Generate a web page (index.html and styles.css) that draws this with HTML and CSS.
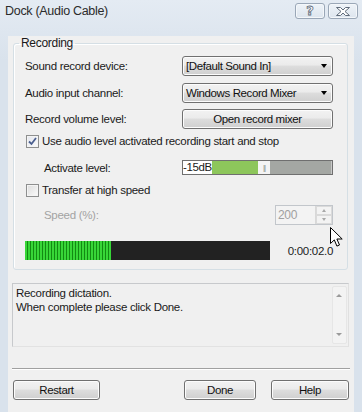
FILE: index.html
```html
<!DOCTYPE html>
<html lang="en">

<head>
  <meta charset="UTF-8">
  <title>Dock (Audio Cable)</title>
  <link rel="stylesheet" href="styles.css">
</head>

<body>
  <div class="window">
    <div class="titlebar">
      <span class="title">Dock (Audio Cable)</span>
      <span class="cap-btn help-btn">?</span>
      <span class="cap-btn close-btn">
        <svg width="16" height="11" viewBox="0 0 16 11">
          <path d="M1.5 1.5h4l2.5 2.5 2.5-2.5h4l-4.5 4 4.5 4h-4l-2.5-2.5-2.5 2.5h-4l4.5-4z" fill="#fff" stroke="#5f6b7a" stroke-width="1" stroke-linejoin="round"/>
        </svg>
      </span>
    </div>

    <div class="client">
      <fieldset class="group">
        <legend>Recording</legend>

        <div class="row row-first">
          <span class="lbl">Sound record device:</span>
          <div class="combo">[Default Sound In]<span class="arrow"></span></div>
        </div>
        <div class="row row-second">
          <span class="lbl">Audio input channel:</span>
          <div class="combo">Windows Record Mixer<span class="arrow"></span></div>
        </div>
        <div class="row row-third">
          <span class="lbl">Record volume level:</span>
          <button class="btn mixer">Open record mixer</button>
        </div>

        <div class="row check-row check-first">
          <span class="check checked">
            <svg width="9" height="9" viewBox="0 0 9 9"><path d="M1 4.5l2.5 2.5 4.5-6" fill="none" stroke="#4b5f8f" stroke-width="1.8"/></svg>
          </span>
          <span>Use audio level activated recording start and stop</span>
        </div>

        <div class="row slider-row">
          <span class="lbl sub">Activate level:</span>
          <div class="slider">
            <span class="db">-15dB</span>
            <span class="fill"></span>
            <span class="thumb">||</span>
            <span class="rest"></span>
          </div>
        </div>

        <div class="row check-row check-second">
          <span class="check"></span>
          <span>Transfer at high speed</span>
        </div>

        <div class="row speed-row">
          <span class="lbl sub disabled">Speed (%):</span>
          <div class="spin">
            <span class="spin-val">200</span>
            <span class="spin-btns">
              <span class="spin-up"></span>
              <span class="spin-down"></span>
            </span>
          </div>
        </div>

        <div class="row meter-row">
          <div class="meter">
            <span class="meter-level" style="width: 86px"></span>
          </div>
          <span class="time">0:00:02.0</span>
        </div>
      </fieldset>

      <div class="log">
        <div class="log-text">
          Recording dictation.<br>
          When complete please click Done.
        </div>
        <div class="scroll">
          <span class="scroll-up"></span>
          <span class="scroll-down"></span>
        </div>
      </div>

      <div class="sep"></div>

      <div class="buttons">
        <button class="btn restart">Restart</button>
        <button class="btn done">Done</button>
        <button class="btn help">Help</button>
      </div>
    </div>

    <svg class="cursor" width="14" height="21" viewBox="0 0 14 21">
      <path d="M0.5 0.5v16l3.8-3.6 2.6 6.2 2.6-1.1-2.6-6h5.3z" fill="#fff" stroke="#000" stroke-width="1" stroke-linejoin="round"/>
    </svg>
  </div>
</body>

</html>
```

FILE: styles.css
```css
html,
body {
  margin: 0;
  height: 100%;
}

body {
  background: #dbe4ee;
  font-family: "Liberation Sans", Arial, sans-serif;
  font-size: 11.5px;
  letter-spacing: -0.3px;
  color: #1a1a1a;
}

.window {
  position: relative;
  width: 362px;
  height: 412px;
  background: linear-gradient(#e4ebf3, #d9e2ec 60px, #d9e2ec);
}

/* title bar */

.titlebar {
  display: flex;
  align-items: flex-start;
  height: 22px;
  padding: 0 4px 0 5px;
}

.title {
  margin-top: 4px;
  font-size: 12.5px;
  color: #2b2b2b;
  flex: 1;
}

.cap-btn {
  display: flex;
  align-items: center;
  justify-content: center;
  width: 28px;
  height: 14px;
  margin-top: 3px;
  border: 1px solid #9aa7b7;
  border-radius: 3px;
  background: linear-gradient(#eef3f8, #dde5ee);
  box-shadow: inset 0 0 0 1px #f4f7fa;
}

.help-btn {
  font-family: "DejaVu Sans", sans-serif;
  font-size: 13px;
  font-weight: bold;
  color: #fff;
  -webkit-text-stroke: 0.8px #5f6b7a;
  line-height: 14px;
  letter-spacing: 0;
}

.close-btn {
  margin-left: 3px;
}

/* client area */

.client {
  height: 382px;
  margin: 0 8px;
  padding: 0 6px 0 5px;
  background: #f0f0f0;
  box-sizing: border-box;
}

.group {
  margin: 14px 0 0;
  padding: 6px 14px 9px 11px;
  border: 1px solid #d5dfe5;
  border-radius: 3px;
  box-shadow: inset 1px 1px 0 #fff;
  min-width: 0;
}

.group legend {
  padding: 0 2px;
  margin-left: -6px;
  line-height: 14px;
  font-size: 12px;
}

.row {
  display: flex;
  align-items: center;
  height: 20px;
}

.row-second {
  margin-top: 7px;
}

.row-third {
  margin-top: 6px;
}

.lbl {
  width: 157px;
  flex: none;
}

.lbl.sub {
  padding-left: 19px;
  box-sizing: border-box;
}

.disabled {
  color: #a3a3a3;
}

/* combo boxes and buttons */

.combo,
.btn {
  position: relative;
  box-sizing: border-box;
  height: 20px;
  border: 1px solid #707070;
  border-radius: 3px;
  background: linear-gradient(#f2f2f2, #ebebeb 45%, #dddddd 50%, #cfcfcf);
  box-shadow: inset 0 0 0 1px #fcfcfc;
  font-family: inherit;
  font-size: 11.5px;
  letter-spacing: -0.4px;
  color: #111;
}

.combo {
  width: 151px;
  padding-left: 3px;
  line-height: 18px;
}

.arrow {
  position: absolute;
  right: 5px;
  top: 7px;
  border-left: 3.5px solid transparent;
  border-right: 3.5px solid transparent;
  border-top: 4px solid #000;
}

.btn {
  padding: 0;
  text-align: center;
}

.mixer {
  width: 151px;
}

/* check boxes */

.check-row {
  height: 16px;
}

.check-first {
  margin-top: 4px;
}

.check-second {
  margin-top: 7px;
}

.check {
  display: flex;
  align-items: center;
  justify-content: center;
  width: 13px;
  height: 13px;
  margin: 0 3px 0 1px;
  box-sizing: border-box;
  border: 1px solid #8e8f8f;
  background: linear-gradient(135deg, #dcdcdc, #fbfbfb);
  box-shadow: inset 0 0 0 1px #f4f4f4;
}

.check.checked {
  background: linear-gradient(135deg, #e3e6ee, #fbfbfb);
}

/* activate level slider */

.slider-row {
  height: 15px;
  margin-top: 11px;
}

.slider {
  display: flex;
  width: 151px;
  height: 15px;
  box-sizing: border-box;
  border: 1px solid #6f6f6f;
  background: #a4a7a3;
}

.db {
  width: 29px;
  background: #fff;
  font-size: 11.5px;
  letter-spacing: -0.4px;
  line-height: 13px;
  white-space: nowrap;
}

.fill {
  width: 46px;
  background: #8dc65b;
}

.thumb {
  width: 12px;
  background: #f4f4f4;
  color: #888;
  font-size: 8px;
  line-height: 13px;
  text-align: center;
  letter-spacing: -1px;
}

.rest {
  flex: 1;
  border-right: 1px solid #c8c8c8;
}

/* speed spin box */

.speed-row {
  margin-top: 7px;
  justify-content: space-between;
}

.spin {
  display: flex;
  width: 58px;
  height: 20px;
  box-sizing: border-box;
  border: 1px solid #c2c6cb;
  background: #f3f3f3;
}

.spin-val {
  flex: 1;
  padding-left: 2px;
  line-height: 18px;
  font-size: 12px;
  color: #a0a0a0;
}

.spin-btns {
  display: flex;
  flex-direction: column;
  width: 16px;
  border-left: 1px solid #d8d8d8;
}

.spin-up,
.spin-down {
  flex: 1;
  position: relative;
  border: 1px solid #dadada;
}

.spin-up::after,
.spin-down::after {
  content: "";
  position: absolute;
  left: 5px;
  top: 2px;
  border-left: 2.5px solid transparent;
  border-right: 2.5px solid transparent;
}

.spin-up::after {
  border-bottom: 3px solid #a8a8a8;
}

.spin-down::after {
  border-top: 3px solid #a8a8a8;
}

/* level meter */

.meter-row {
  height: 19px;
  margin-top: 16px;
  justify-content: space-between;
}

.meter {
  display: flex;
  width: 245px;
  height: 19px;
  background: #222;
}

.meter-level {
  background: repeating-linear-gradient(90deg, #37d637 0, #37d637 2px, #128a12 2px, #128a12 3px);
}

.time {
  font-size: 11.5px;
  color: #222;
}

/* message box */

.log {
  display: flex;
  height: 64px;
  margin: 13px -1px 0 -1px;
  box-sizing: border-box;
  border: 1px solid #c7c9cc;
  border-right-color: #e0e0e0;
  border-bottom-color: #e2e2e2;
}

.log-text {
  flex: 1;
  padding: 2px 0 0 3px;
  line-height: 14px;
  font-size: 11.5px;
}

.scroll {
  position: relative;
  width: 13px;
  margin: 2px 1px 2px 0;
  border: 1px solid #e6e6e6;
  border-radius: 2px;
  background: #f3f3f3;
}

.scroll-up,
.scroll-down {
  position: absolute;
  left: 3px;
  border-left: 3px solid transparent;
  border-right: 3px solid transparent;
}

.scroll-up {
  top: 7px;
  border-bottom: 3px solid #9a9a9a;
}

.scroll-down {
  bottom: 7px;
  border-top: 3px solid #9a9a9a;
}

.sep {
  height: 0;
  margin: 21px -2px 0 -1px;
  border-top: 1px solid #a0a0a0;
  border-bottom: 1px solid #fff;
}

/* bottom buttons */

.buttons {
  display: flex;
  margin: 10px -1px 0 0;
}

.restart {
  width: 87px;
}

.done {
  width: 72px;
  margin-left: auto;
}

.help {
  width: 78px;
  margin-left: 15px;
}

.cursor {
  position: absolute;
  left: 330px;
  top: 227px;
}
```
